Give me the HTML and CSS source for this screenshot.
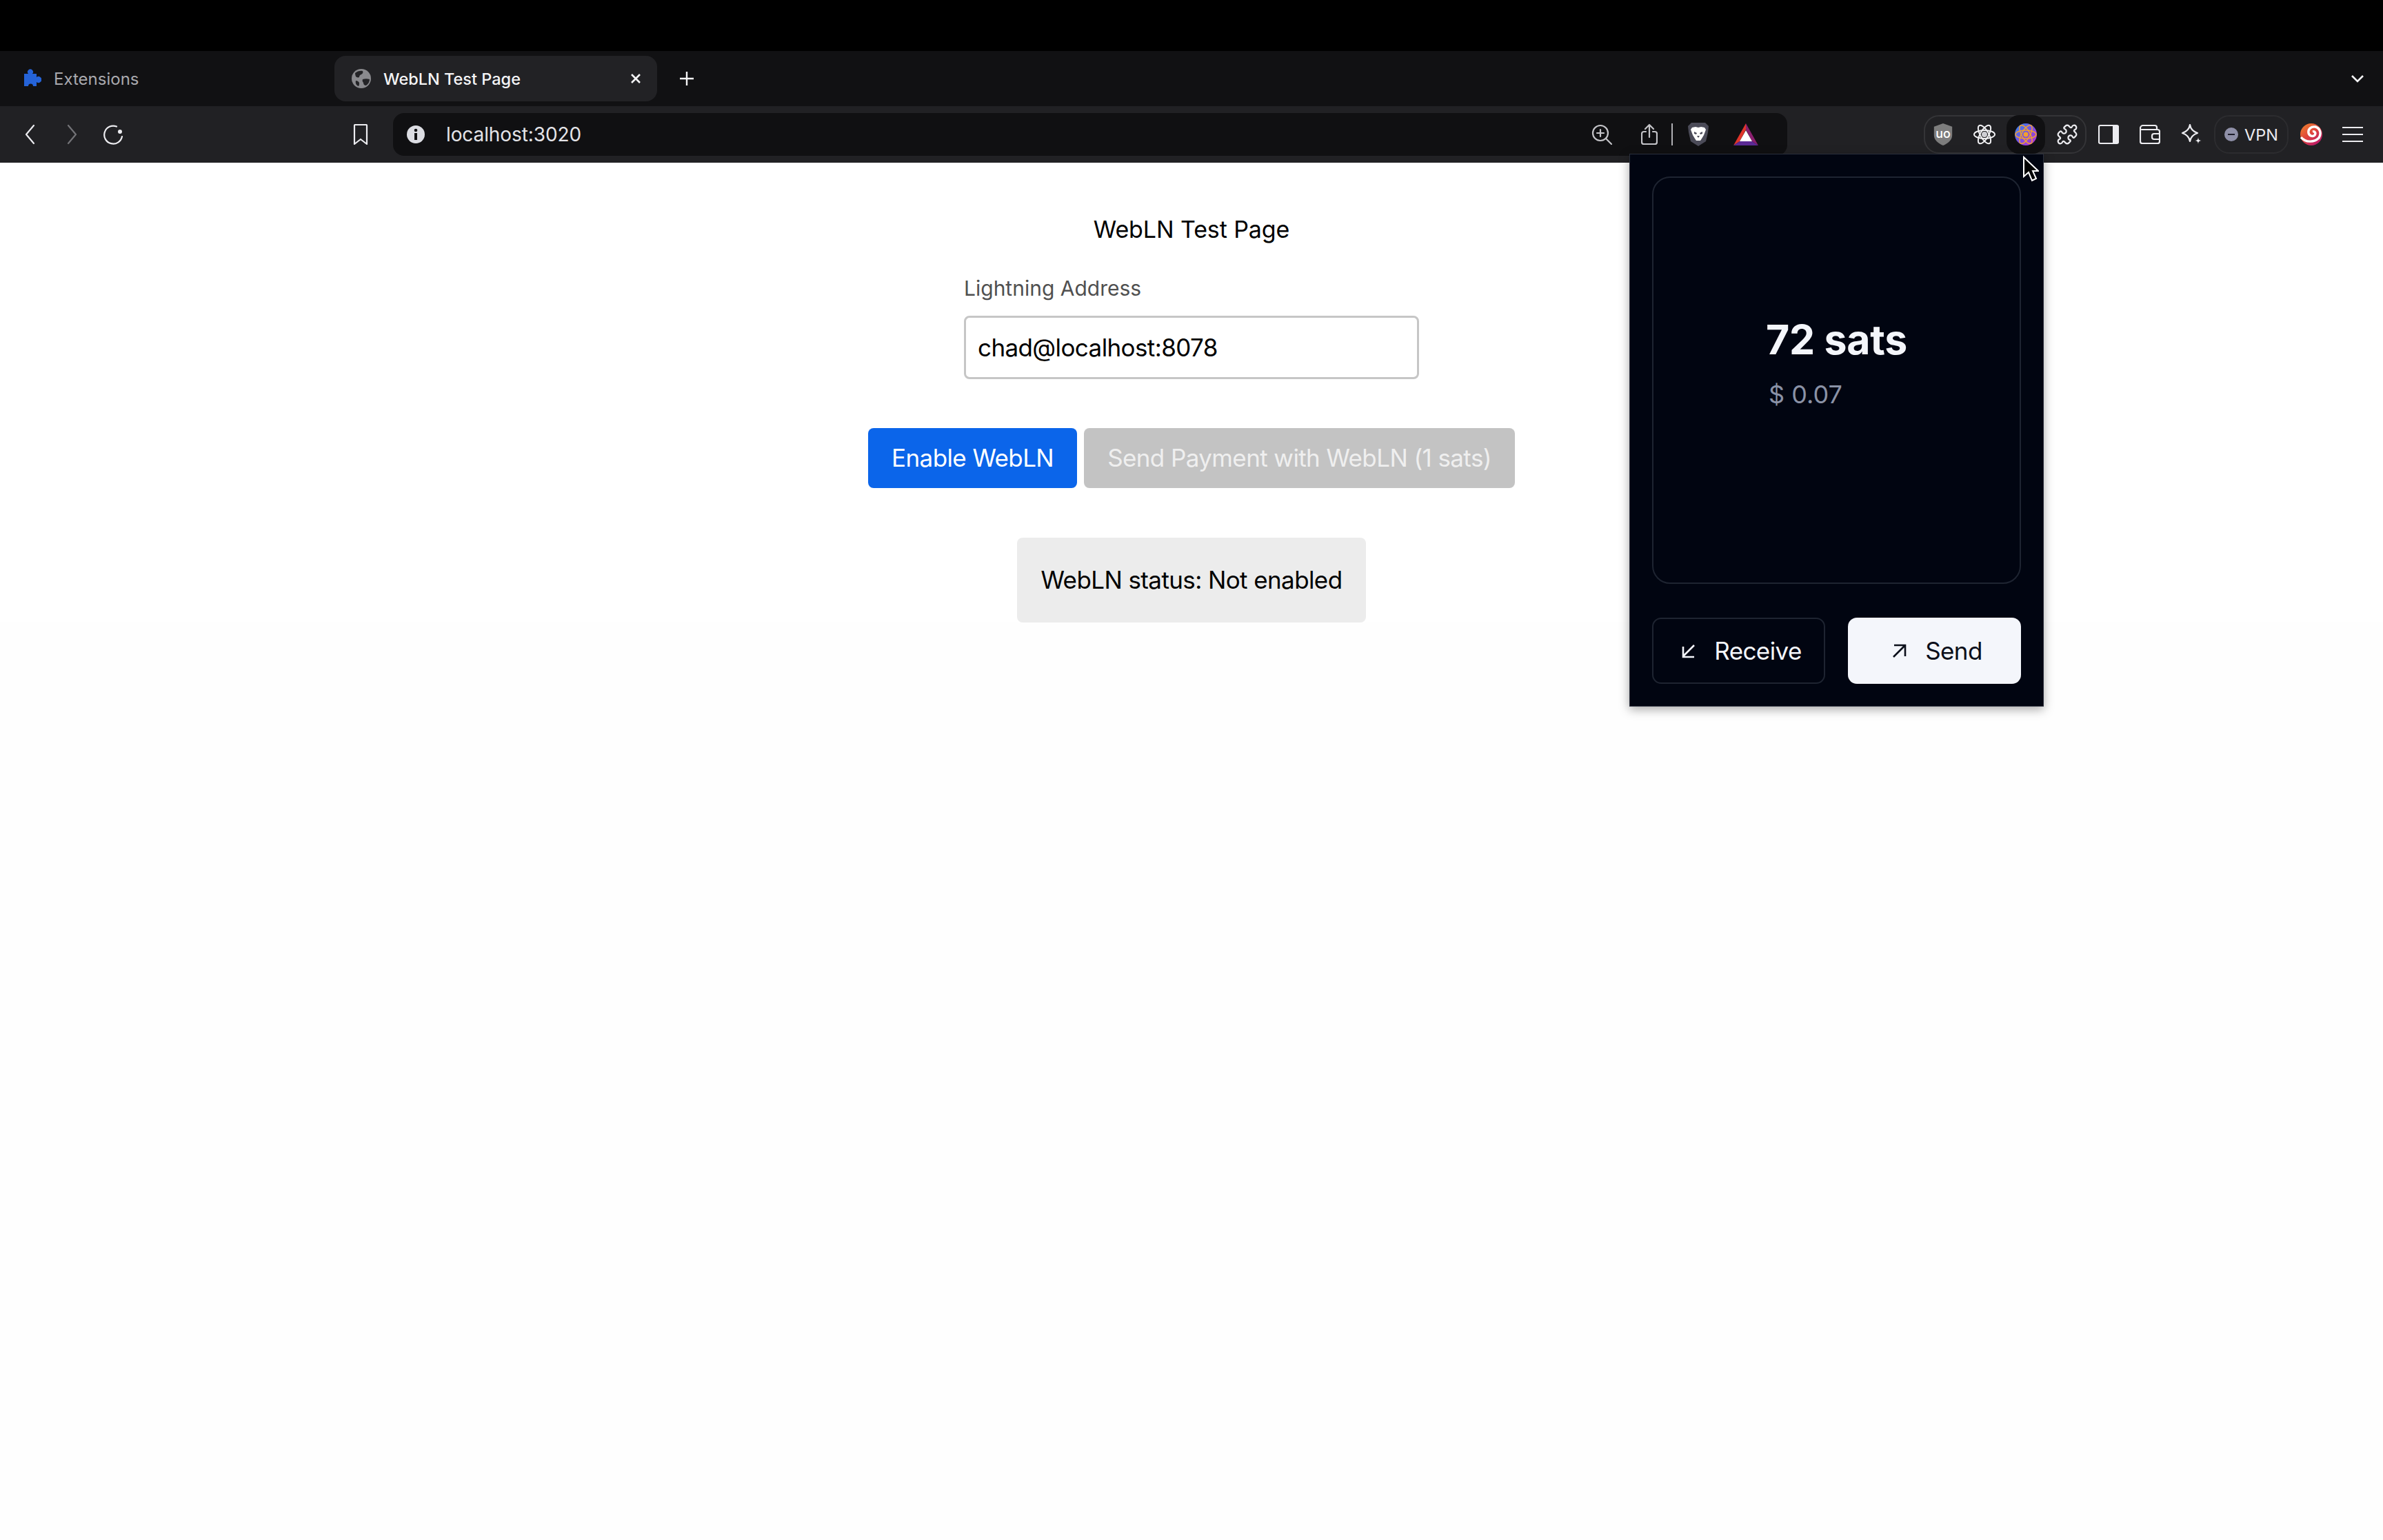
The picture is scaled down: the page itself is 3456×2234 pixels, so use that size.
FILE: index.html
```html
<!DOCTYPE html>
<html>
<head>
	<meta charset="utf-8" />
	<title>WebLN Test Page</title>
	<link rel="stylesheet" href="styles.css">
</head>
<body>
<div class="topBlack"></div>

<!-- tabs -->
<div class="tabBar">
	<div class="tab tabOff">
		<svg class="favIcon" viewBox="0 0 28 28"><path fill="#2563d8" d="M3 7h6a4 4 0 1 1 6 0h6v5a4.500 4.500 0 1 1 0 7v6h-5a3.500 3.500 0 0 0-7 0H3Z"/></svg>
		<span class="tabText tabTextOff">Extensions</span>
	</div>
	<div class="tab tabOn">
		<svg class="favIcon" viewBox="0 0 28 28"><circle cx="14" cy="14" r="14" fill="#8a8a8e"/><path fill="#242427" d="M5 6c3-3 8-4 11-3 1 2 0 4-2 5-2 .6-3 2-3 4-2 1-4 0-5-1-.5-2-1-3-1-5Zm11 9c3-1 7-1 10 0 0 4-2 7-5 9-3 0-4-2-4-4-1-1-2-3-1-5ZM6 17c2 0 4 1 5 3 0 2 0 4-1 5-3-1-5-4-4-8Z"/></svg>
		<span class="tabText">WebLN Test Page</span>
		<svg class="tabClose" viewBox="0 0 16 16"><path d="M2 2l12 12M14 2L2 14"/></svg>
	</div>
	<svg class="newTab" viewBox="0 0 22 22"><path d="M11 1v20M1 11h20"/></svg>
	<svg class="tabList" viewBox="0 0 20 12"><path d="M2 2l8 8 8-8"/></svg>
</div>

<!-- barre d'outils -->
<div class="toolBar">
	<div class="navBtn"><svg class="ico" viewBox="0 0 30 30"><path d="M20 2L9 15l11 13"/></svg></div>
	<div class="navBtn navOff"><svg class="ico" viewBox="0 0 30 30"><path d="M10 2l11 13-11 13"/></svg></div>
	<div class="navBtn"><svg class="ico" viewBox="0 0 30 30"><path d="M20 3.500A13 13 0 1 0 28 18"/><circle class="icoFill" cx="25" cy="11" r="3"/></svg></div>
	<div class="navBtn markBtn"><svg class="ico" viewBox="0 0 30 30"><path d="M7 1h16a1 1 0 0 1 1 1v27l-9-7-9 7V2a1 1 0 0 1 1-1Z"/></svg></div>

	<div class="urlBar">
		<svg class="infoIcon" viewBox="0 0 26 26"><circle cx="13" cy="13" r="13" fill="#dcdde3"/><rect x="11" y="11" width="4" height="10" fill="#101012"/><circle cx="13" cy="7" r="2.300" fill="#101012"/></svg>
		<span class="urlText">localhost:3020</span>
		<div class="urlIcons">
			<svg class="ico zoomIcon" viewBox="0 0 30 30"><circle cx="13" cy="13" r="11"/><path d="M13 8v10M8 13h10M21 21l8 8"/></svg>
			<svg class="ico shareIcon" viewBox="0 0 24 32"><path d="M7 12H4a3 3 0 0 0-3 3v12a3 3 0 0 0 3 3h16a3 3 0 0 0 3-3V15a3 3 0 0 0-3-3h-3M12 20V2M6 8l6-6 6 6"/></svg>
			<span class="urlSep"></span>
			<svg class="braveIcon" viewBox="0 0 32 36"><path fill="#4b4b58" d="M6 1h20l5 5-1 9-3 13-11 7-11-7L2 15 1 6Z"/><path fill="#fff" d="M7 8l5-1 4 1 4-1 5 1 2 3-3 8-3 5-2 3h-6l-2-3-3-5-3-8Z"/><path fill="#4b4b58" d="M10 14l4 2-1 2-3-1Zm12 0l-4 2 1 2 3-1Zm-8 6h4l-2 3Z"/></svg>
			<svg class="batIcon" viewBox="0 0 36 32"><path fill="#e0352b" d="M18 0L0 32l9-6L18 9Z"/><path fill="#8a1f6f" d="M18 0l18 32-9-6L18 9Z"/><path fill="#5b2a94" d="M0 32h36l-9-6H9Z"/><path fill="#fff" d="M18 10l9 16H9Z"/></svg>
		</div>
	</div>

	<div class="extGroup">
		<div class="extSlot">
			<svg class="extIcon" viewBox="0 0 30 34"><path fill="#7d7d7d" d="M15 0l14 5v13c0 8-7 13-14 16C8 31 1 26 1 18V5Z"/><text class="uoText" x="15" y="22" text-anchor="middle">uo</text></svg>
		</div>
		<div class="extSlot">
			<svg class="extIcon" viewBox="0 0 32 32"><g fill="none" stroke="#f2f2f4" stroke-width="2"><ellipse cx="16" cy="16" rx="15" ry="6"/><ellipse cx="16" cy="16" rx="15" ry="6" transform="rotate(60 16 16)"/><ellipse cx="16" cy="16" rx="15" ry="6" transform="rotate(120 16 16)"/></g><circle cx="16" cy="16" r="4" fill="#cfcfd4"/></svg>
		</div>
		<div class="extSlot extActive">
			<svg class="extIcon" viewBox="0 0 32 32"><defs><linearGradient id="gradAtom" x1="0" y1="0" x2="1" y2="1"><stop offset="0" stop-color="#2f8fe8"/><stop offset="0.5" stop-color="#7a4fe6"/><stop offset="1" stop-color="#c22fc8"/></linearGradient></defs><circle cx="16" cy="16" r="16" fill="url(#gradAtom)"/><g fill="none" stroke="#f0a030" stroke-width="1.500"><ellipse cx="16" cy="16" rx="15" ry="6"/><ellipse cx="16" cy="16" rx="15" ry="6" transform="rotate(60 16 16)"/><ellipse cx="16" cy="16" rx="15" ry="6" transform="rotate(120 16 16)"/></g><circle cx="16" cy="16" r="3.500" fill="#f0a030"/></svg>
		</div>
		<div class="extSlot">
			<svg class="ico puzzleIcon" viewBox="0 0 24 24"><path d="M19.439 7.85c-.049.322.059.648.289.878l1.568 1.568c.47.47.706 1.087.706 1.704s-.235 1.233-.706 1.704l-1.611 1.611a.98.98 0 0 1-.837.276c-.47-.07-.802-.48-.968-.925a2.501 2.501 0 1 0-3.214 3.214c.446.166.855.497.925.968a.979.979 0 0 1-.276.837l-1.61 1.61a2.404 2.404 0 0 1-1.705.707 2.402 2.402 0 0 1-1.704-.706l-1.568-1.568a1.026 1.026 0 0 0-.877-.29c-.493.074-.84.504-1.02.968a2.5 2.5 0 1 1-3.237-3.237c.464-.18.894-.527.967-1.02a1.026 1.026 0 0 0-.289-.877l-1.568-1.568A2.402 2.402 0 0 1 1.998 12c0-.617.236-1.234.706-1.704L4.23 8.77c.24-.24.581-.353.917-.303.515.077.877.528 1.073 1.01a2.5 2.5 0 1 0 3.259-3.259c-.482-.196-.933-.558-1.01-1.073-.05-.336.062-.676.303-.917l1.525-1.525A2.402 2.402 0 0 1 12 1.998c.617 0 1.234.236 1.704.706l1.568 1.568c.23.23.556.338.877.29.493-.074.84-.504 1.02-.968a2.5 2.5 0 1 1 3.237 3.237c-.464.18-.894.527-.967 1.02Z"/></svg>
		</div>
	</div>

	<svg class="ico toolIcon firstTool" viewBox="0 0 30 28"><rect x="1" y="1" width="28" height="26" rx="2"/><path class="icoFill" d="M21 1h7a1 1 0 0 1 1 1v24a1 1 0 0 1-1 1h-7Z"/></svg>
	<svg class="ico toolIcon" viewBox="0 0 30 28"><path d="M25 7V4a3 3 0 0 0-3-3H5a4 4 0 0 0-4 4v19a3 3 0 0 0 3 3h22a3 3 0 0 0 3-3V10a3 3 0 0 0-3-3H3M29 13h-8a3 3 0 0 0-3 3v2a3 3 0 0 0 3 3h8"/></svg>
	<svg class="ico toolIcon" viewBox="0 0 30 30"><path d="M13 1c1 6 5 10 11 12-6 2-10 6-11 12-1-6-5-10-11-12 6-2 10-6 11-12Z"/><path class="icoFill" d="M25 19c.4 3.500 1 4.500 4.500 5-3.500.5-4.100 1.500-4.500 5-.4-3.500-1-4.500-4.500-5 3.500-.5 4.100-1.500 4.500-5Z"/></svg>

	<div class="vpnPill">
		<span class="vpnDot"></span>
		<span class="vpnText">VPN</span>
	</div>

	<svg class="swirlIcon" viewBox="0 0 32 32"><defs><linearGradient id="gradSwirl" x1="0" y1="0" x2="0.800" y2="1"><stop offset="0" stop-color="#f08a2c"/><stop offset="0.5" stop-color="#e0453a"/><stop offset="1" stop-color="#b8166e"/></linearGradient></defs><circle cx="16" cy="16" r="16" fill="url(#gradSwirl)"/><path d="M1 20c7 8 19 8 26 1 4-6 2-14-5-16-6-1-11 3-10 9 1 4 6 6 9 3 2-3 0-6-3-5" fill="none" stroke="#fff" stroke-width="3.400"/></svg>

	<svg class="ico menuIcon" viewBox="0 0 30 24"><path d="M0 2h30M0 12h30M0 22h30"/></svg>
</div>

<!-- page -->
<div class="page">
	<h1 class="pageTitle">WebLN Test Page</h1>
	<div class="field">
		<label class="fieldLabel">Lightning Address</label>
		<div class="fieldInput">chad@localhost:8078</div>
	</div>
	<div class="actions">
		<div class="btn btnBlue">Enable WebLN</div>
		<div class="btn btnOff">Send Payment with WebLN (1 sats)</div>
	</div>
	<div class="status">WebLN status: Not enabled</div>
</div>

<!-- popup extension -->
<div class="popup">
	<div class="balanceCard">
		<div class="balanceBlock">
			<div class="balanceSats">72 sats</div>
			<div class="balanceFiat">$ 0.07</div>
		</div>
	</div>
	<div class="popupBtns">
		<div class="popBtn popReceive">
			<svg class="arrow" viewBox="0 0 21 21"><path d="M19 2L3 18M3 4v15h16"/></svg>
			<span>Receive</span>
		</div>
		<div class="popBtn popSend">
			<svg class="arrow" viewBox="0 0 21 21"><path d="M2 19L18 3M3 2h16v16"/></svg>
			<span>Send</span>
		</div>
	</div>
</div>

<svg class="cursor" viewBox="0 0 24 38"><path d="M2 2v28l7-6 5 12 6-3-5-11h8Z" fill="#000" stroke="#fff" stroke-width="2"/></svg>
</body>
</html>
```

FILE: styles.css
```css
body{
	margin: 0;
	padding: 0;
	position: relative;
	height: 2234px;
	overflow: hidden;
	background-color: #fefefe;
	font-family: Inter, "Liberation Sans", sans-serif;
}
svg{
	display: block;
	flex: none;
}
/* icones au trait */
.ico{
	fill: none;
	stroke: #ececf0;
	stroke-width: 2.2;
	stroke-linecap: round;
	stroke-linejoin: round;
}
.ico .icoFill{
	fill: #ececf0;
	stroke: none;
}
.topBlack{
	height: 74px;
	background-color: #000;
}
/* onglets */
.tabBar{
	display: flex;
	align-items: center;
	height: 80px;
	background-color: #111113;
	padding-top: 0;
}
.tab{
	display: flex;
	align-items: center;
	height: 66px;
	box-sizing: border-box;
}
.tabOff{
	width: 485px;
	padding-left: 32px;
}
.tabOn{
	width: 468px;
	padding: 0 23px 0 25px;
	background-color: #222225;
	border-radius: 16px;
}
.favIcon{
	width: 28px;
	height: 28px;
}
.tabText{
	margin-left: 18px;
	font-size: 23.5px;
	font-weight: 500;
	color: #f4f4f6;
}
.tabTextOff{
	font-size: 24px;
	color: #a9a9ae;
	font-weight: 400;
}
.tabClose{
	width: 16px;
	height: 16px;
	margin-left: auto;
	fill: none;
	stroke: #f4f4f6;
	stroke-width: 2.6;
}
.newTab{
	width: 22px;
	height: 22px;
	margin-left: 32px;
	fill: none;
	stroke: #f4f4f6;
	stroke-width: 2.4;
}
.tabList{
	width: 20px;
	height: 12px;
	margin-left: auto;
	margin-right: 27px;
	fill: none;
	stroke: #f4f4f6;
	stroke-width: 2.6;
}
/* barre d'outils */
.toolBar{
	display: flex;
	align-items: center;
	height: 82px;
	padding-left: 14px;
	background-color: #212124;
}
.navBtn{
	display: flex;
	justify-content: center;
	width: 60px;
}
.navBtn .ico{
	width: 30px;
	height: 30px;
}
.navOff .ico{
	stroke: #737377;
}
.markBtn{
	margin-left: 299px;
}
.urlBar{
	display: flex;
	align-items: center;
	width: 2022px;
	height: 62px;
	margin-left: 17px;
	padding-left: 20px;
	box-sizing: border-box;
	background-color: #101012;
	border-radius: 16px;
}
.infoIcon{
	width: 26px;
	height: 26px;
}
.urlText{
	margin-left: 31px;
	font-size: 28px;
	letter-spacing: -0.1px;
	color: #e4e4e8;
}
.urlIcons{
	display: flex;
	align-items: center;
	margin-left: auto;
}
.zoomIcon{
	width: 30px;
	height: 30px;
	stroke: #c4c4c8;
}
.shareIcon{
	width: 24px;
	height: 32px;
	margin-left: 42px;
	stroke: #c4c4c8;
}
.urlSep{
	width: 2px;
	height: 32px;
	margin-left: 20px;
	background-color: #b0b0b4;
}
.braveIcon{
	width: 32px;
	height: 36px;
	margin-left: 21px;
}
.batIcon{
	width: 36px;
	height: 32px;
	margin-left: 35px;
	margin-right: 42px;
}
.extGroup{
	display: flex;
	gap: 4px;
	width: 236px;
	height: 56px;
	margin-left: 198px;
	box-sizing: border-box;
	border: 2px solid #343437;
	border-radius: 22px;
}
.extSlot{
	display: flex;
	align-items: center;
	justify-content: center;
	flex: none;
	width: 56px;
	height: 56px;
	margin-top: -2px;
}
.extSlot:first-child{
	margin-left: -2px;
}
.extActive{
	background-color: #101012;
	border-radius: 18px;
}
.extIcon{
	width: 32px;
	height: 32px;
}
.uoText{
	font-family: Inter, sans-serif;
	font-size: 19px;
	font-weight: 500;
	fill: #fff;
}
.puzzleIcon{
	width: 32px;
	height: 32px;
	stroke-width: 1.700;
}
.toolIcon{
	width: 30px;
	height: 30px;
	margin-left: 30px;
}
.firstTool{
	margin-left: 17px;
}
.vpnPill{
	display: flex;
	align-items: center;
	justify-content: center;
	gap: 9px;
	width: 108px;
	height: 56px;
	margin-left: 18px;
	box-sizing: border-box;
	border: 2px solid #2c2c2f;
	border-radius: 22px;
}
.vpnDot{
	position: relative;
	width: 20px;
	height: 20px;
	border-radius: 50%;
	background-color: #8f90a8;
}
.vpnDot:after{
	content: "";
	display: block;
	width: 10px;
	height: 2px;
	margin: 9px 5px;
	background-color: #1c1c2a;
}
.vpnText{
	font-size: 23.5px;
	font-weight: 400;
	color: #ececf0;
}
.swirlIcon{
	width: 32px;
	height: 32px;
	margin-left: 17px;
}
.menuIcon{
	width: 30px;
	height: 24px;
	margin-left: 29px;
}
/* page de test */
.page{
	display: flex;
	flex-direction: column;
	align-items: center;
	padding-top: 75px;
	background-color: #fff;
}
.pageTitle{
	margin: 0;
	font-size: 34px;
	line-height: 44px;
	font-weight: 400;
	letter-spacing: -0.1px;
	color: #000;
}
.field{
	width: 660px;
	margin-top: 43px;
}
.fieldLabel{
	display: block;
	font-size: 30px;
	line-height: 40px;
	color: #505050;
}
.fieldInput{
	height: 92px;
	margin-top: 20px;
	padding-left: 17px;
	box-sizing: border-box;
	border: 3px solid #c6c6c6;
	border-radius: 8px;
	font-size: 35px;
	letter-spacing: -0.6px;
	line-height: 87px;
	color: #000;
}
.actions{
	display: flex;
	gap: 10px;
	margin-top: 71px;
}
.btn{
	height: 87px;
	padding: 0 34px;
	border-radius: 8px;
	font-size: 35px;
	letter-spacing: -0.6px;
	line-height: 87px;
	color: #fff;
}
.btnBlue{
	background-color: #0b65ea;
}
.btnOff{
	background-color: #c3c3c3;
	color: #efefef;
}
.status{
	height: 123px;
	margin-top: 72px;
	padding: 0 35px;
	background-color: #ececec;
	border-radius: 8px;
	font-size: 35px;
	letter-spacing: -0.6px;
	line-height: 123px;
	color: #000;
}
/* popup */
.popup{
	position: absolute;
	left: 2363px;
	top: 223px;
	width: 601px;
	height: 802px;
	box-sizing: border-box;
	padding: 32px;
	display: flex;
	flex-direction: column;
	background-color: #010511;
	border: 1px solid #2a2f3c;
	box-shadow: 0 4px 14px rgba(0, 0, 0, 0.35);
}
.balanceCard{
	display: flex;
	align-items: center;
	justify-content: center;
	height: 591px;
	box-sizing: border-box;
	border: 2px solid #1e2431;
	border-radius: 26px;
}
.balanceBlock{
	margin-top: -51px;
}
.balanceSats{
	font-size: 59px;
	line-height: 70px;
	font-weight: 700;
	letter-spacing: -0.3px;
	color: #f4f6fb;
}
.balanceFiat{
	margin-top: 22px;
	padding-left: 4px;
	font-size: 36px;
	line-height: 44px;
	color: #8a92a6;
}
.popupBtns{
	display: flex;
	justify-content: space-between;
	margin-top: 49px;
}
.popBtn{
	display: flex;
	align-items: center;
	justify-content: center;
	gap: 27px;
	width: 251px;
	height: 96px;
	padding-left: 8px;
	box-sizing: border-box;
	border-radius: 13px;
	font-size: 35px;
	letter-spacing: -0.6px;
	font-weight: 400;
}
.popReceive{
	border: 2px solid #1e2431;
	color: #f4f6fb;
}
.popSend{
	background-color: #f4f6fb;
	color: #0b0f1a;
}
.arrow{
	width: 21px;
	height: 21px;
	fill: none;
	stroke: currentColor;
	stroke-width: 2.6;
}
.cursor{
	position: absolute;
	left: 2933px;
	top: 226px;
	width: 24px;
	height: 38px;
}
```
